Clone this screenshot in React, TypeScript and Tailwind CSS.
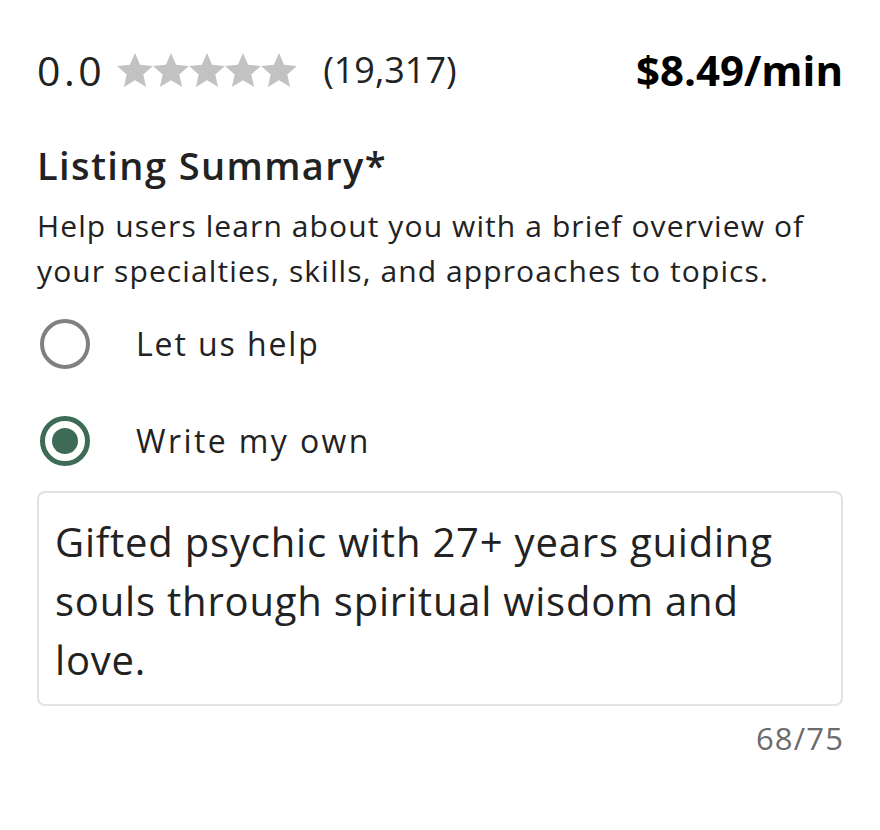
import React from "react";

const Star = () => (
  <svg width="36" height="34" viewBox="1.2 1.5 21.6 20.5" className="block">
    <path
      d="M12 1.5l3.1 7.1 7.7.7-5.8 5.1 1.7 7.6L12 18l-6.7 4 1.7-7.6-5.8-5.1 7.7-.7z"
      fill="#c2c2c2"
    />
  </svg>
);

export default function App() {
  return (
    <div
      className="w-[880px] h-[830px] bg-white text-[#222] px-[37px] pt-[45px]"
      style={{ fontFamily: "'Open Sans', 'Noto Sans', sans-serif" }}
    >
      <div className="flex items-center justify-between h-[50px]">
        <div className="flex items-center">
          <span className="text-[41px] leading-none tracking-[3.5px]">0.0</span>
          <div className="flex ml-[12px]">
            <Star />
            <Star />
            <Star />
            <Star />
            <Star />
          </div>
          <span className="text-[36px] leading-none ml-[26px]">(19,317)</span>
        </div>
        <span className="text-[42px] leading-none font-bold text-black">$8.49/min</span>
      </div>

      <h2 className="mt-[46px] text-[38px] leading-[48px] font-semibold tracking-[1.4px]">Listing Summary*</h2>
      <p className="mt-[14px] text-[30px] leading-[45px] max-w-[790px] tracking-[1.1px]">
        Help users learn about you with a brief overview of your specialties, skills, and approaches to topics.
      </p>

      <div className="mt-[23px] flex items-center h-[56px]">
        <div className="w-[50px] h-[50px] rounded-full border-[4px] border-[#808080] ml-[3px]" />
        <span className="ml-[46px] text-[32px] leading-[48px] tracking-[1.9px]">Let us help</span>
      </div>
      <div className="mt-[41px] flex items-center h-[56px]">
        <div className="w-[50px] h-[50px] rounded-full border-[5px] border-[#3d6b55] ml-[3px] flex items-center justify-center">
          <div className="w-[26px] h-[26px] rounded-full bg-[#3d6b55]" />
        </div>
        <span className="ml-[46px] text-[32px] leading-[48px] tracking-[2.4px]">Write my own</span>
      </div>

      <div className="mt-[22px] h-[215px] border-2 border-[#e2e2e2] rounded-[8px] px-[16px] pt-[19px]">
        <p className="text-[40px] leading-[59px] max-w-[745px] tracking-[0.8px]">
          Gifted psychic with 27+ years guiding souls through spiritual wisdom and love.
        </p>
      </div>
      <div className="mt-[15px] text-right text-[31px] leading-[34px] text-[#6b6b6b] tracking-[1.2px] mr-[-1.2px]">
        68/75
      </div>
    </div>
  );
}
